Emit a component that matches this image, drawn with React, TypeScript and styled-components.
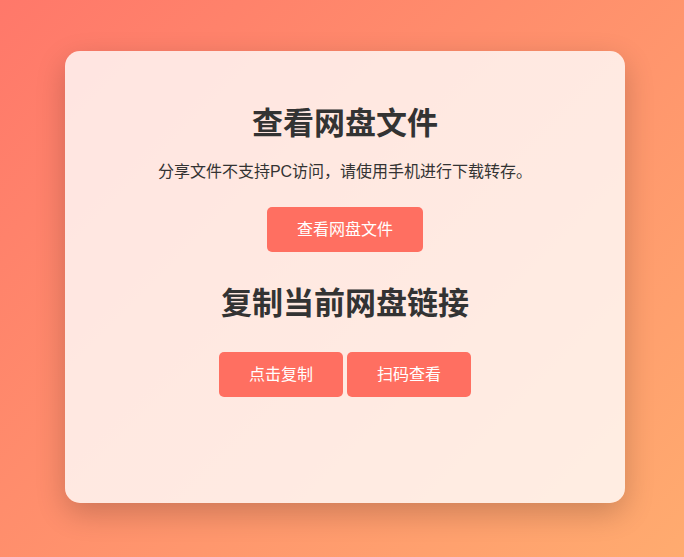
import React from "react";
import styled, { createGlobalStyle } from "styled-components";

const GlobalStyle = createGlobalStyle`
  html, body {
    margin: 0;
    padding: 0;
  }
  body {
    font-family: "Liberation Sans", "Noto Sans CJK SC", sans-serif;
    color: #333;
  }
`;

function App() {
  return (
    <>
      <GlobalStyle />
      <Page>
        <Card>
          <Title>查看网盘文件</Title>
          <Notice>分享文件不支持PC访问，请使用手机进行下载转存。</Notice>
          <ButtonRow>
            <Button>查看网盘文件</Button>
          </ButtonRow>
          <Title $second>复制当前网盘链接</Title>
          <ButtonRow $gap={4}>
            <Button>点击复制</Button>
            <Button>扫码查看</Button>
          </ButtonRow>
        </Card>
      </Page>
    </>
  );
}

export default App;

const Page = styled.div`
  width: 100%;
  height: 100vh;
  display: flex;
  justify-content: center;
  align-items: center;
  padding-left: 6px;
  box-sizing: border-box;
  background: linear-gradient(135deg, #ff786a 0%, #ffab6f 100%);
`;

const Card = styled.div`
  width: 560px;
  box-sizing: border-box;
  padding: 53px 40px 106px;
  margin-top: -3px;
  background: rgba(255, 255, 255, 0.8);
  border-radius: 15px;
  box-shadow: 0 10px 30px rgba(0, 0, 0, 0.2);
  text-align: center;
`;

const Title = styled.h1<{ $second?: boolean }>`
  margin: ${({ $second }) => ($second ? "32px 0 28px" : "0 0 16px")};
  font-size: 31px;
  line-height: 40px;
  font-weight: bold;
  color: #333;
`;

const Notice = styled.p`
  margin: 0 0 23px;
  font-size: 16px;
  line-height: 24px;
  color: #333;
`;

const ButtonRow = styled.div<{ $gap?: number }>`
  display: flex;
  justify-content: center;
  gap: ${({ $gap }) => $gap ?? 0}px;
`;

const Button = styled.button`
  border: none;
  border-radius: 5px;
  background: #ff6f61;
  color: #fff;
  font-family: "Liberation Sans", "Noto Sans CJK SC", sans-serif;
  font-size: 16px;
  line-height: 21px;
  padding: 12px 30px;
  cursor: pointer;
`;
